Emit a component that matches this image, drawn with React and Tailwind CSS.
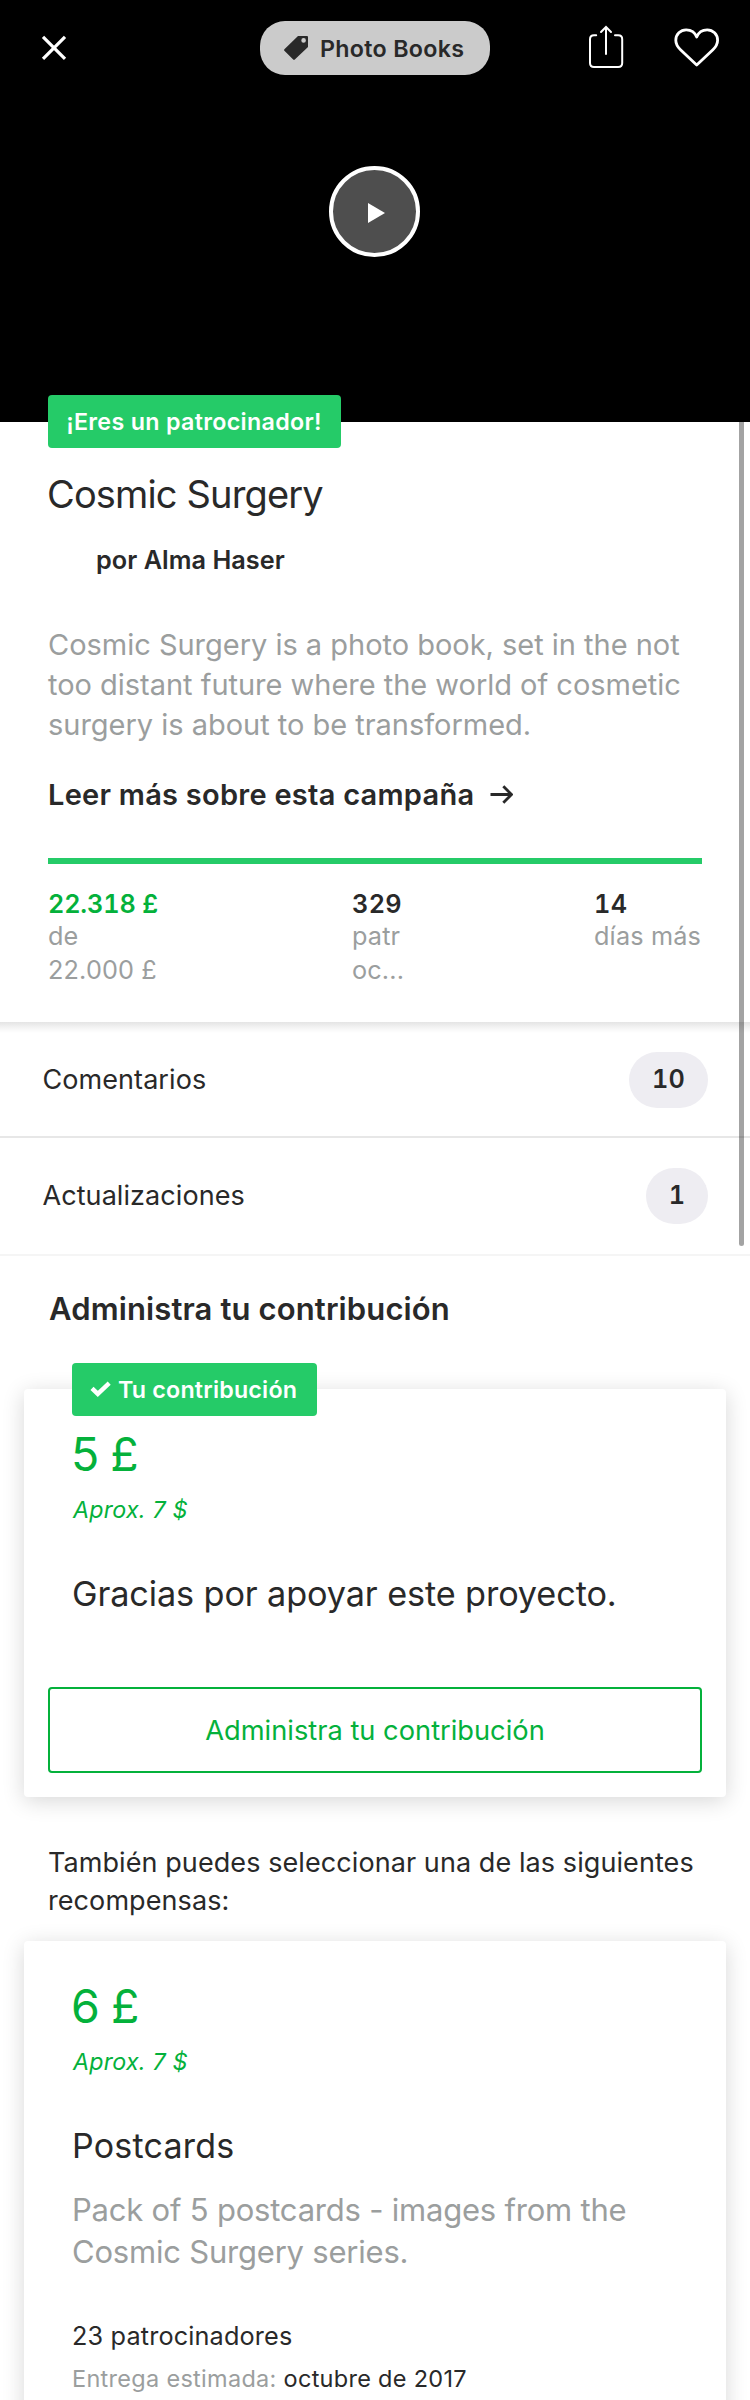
function CloseIcon() {
  return (
    <svg className="h-[54px] w-7" viewBox="40 21 28 54" fill="none" stroke="#fff" strokeWidth="3.2">
      <path d="M43 36.8 65 58.8M65 36.8 43 58.8" />
    </svg>
  )
}

function TagIcon() {
  return (
    <svg className="h-6 w-6" viewBox="284 36 24 24" fill="#292929">
      <path
        fillRule="evenodd"
        d="M298 36H307Q308 36 308 37V47L294.8 59.6Q294 60.3 293.2 59.6L284.4 50.8Q283.7 50 284.4 49.2ZM303.6 38.1a2.3 2.3 0 1 0 0 4.6 2.3 2.3 0 0 0 0-4.6Z"
      />
    </svg>
  )
}

function ShareIcon() {
  return (
    <svg className="h-[54px] w-10" viewBox="586 21 40 54" fill="none" stroke="#fff" strokeWidth="2" strokeLinecap="round">
      <path d="M596.2 35.2H594Q590 35.2 590 39.2V63Q590 67 594 67H618.2Q622.2 67 622.2 63V39.2Q622.2 35.2 618.2 35.2H615" />
      <path d="M606 54V27.6M601 32 606 27 611 32" />
    </svg>
  )
}

function HeartIcon() {
  return (
    <svg className="h-[54px] w-[50px]" viewBox="672 21 50 54" fill="none" stroke="#fff" strokeWidth="2.8" strokeLinejoin="round">
      <path d="M696.7 65 680.5 49.8C677.3 46.7 675.8 43.6 675.8 40.3 675.8 34.2 680.5 29.8 686.2 29.8 691 29.8 694.9 32.3 696.7 37 698.5 32.3 702.4 29.8 707.2 29.8 712.9 29.8 717.6 34.2 717.6 40.3 717.6 43.6 716.1 46.7 712.9 49.8Z" />
    </svg>
  )
}

function Hero() {
  return (
    <header className="h-[422px] bg-black pt-[21px]">
      <div className="flex h-[54px] items-center pl-10">
        <CloseIcon />
        <div className="ml-48 flex h-[54px] w-[230px] items-center rounded-[25px] bg-[#cbcbcb] pl-6">
          <TagIcon />
          <span className="ml-3 whitespace-nowrap pt-0.5 text-[23.25px] font-semibold tracking-[0.3px]">Photo Books</span>
        </div>
        <div className="ml-24">
          <ShareIcon />
        </div>
        <div className="ml-[46px]">
          <HeartIcon />
        </div>
      </div>
      <div className="ml-[329px] mt-[91px] flex h-[91px] w-[91px] items-center justify-center rounded-full border-4 border-white bg-[#4e4e4e]">
        <svg className="ml-[3px] mt-[3px] h-5 w-[17px]" viewBox="0 0 17 20" fill="#fff">
          <path d="M0 0 17 10 0 20Z" />
        </svg>
      </div>
    </header>
  )
}

function Stat({ value, lines, valueClass, className }) {
  return (
    <div className={className}>
      <div className={'-mb-px whitespace-nowrap font-semibold leading-[31px] tabular-nums ' + valueClass}>{value}</div>
      {lines.map((line) => (
        <div key={line} className="whitespace-nowrap leading-[34px] tracking-[0.15px] text-[#9b9e9e]">
          {line}
        </div>
      ))}
    </div>
  )
}

function Campaign() {
  return (
    <section className="relative -mt-[27px] h-[627px] px-12">
      <div className="flex h-[53px] w-[293px] items-center justify-center rounded bg-[#25cb68] pr-px pt-0.5 text-[23.25px] font-semibold tracking-[0.32px] text-white">
        ¡Eres un patrocinador!
      </div>
      <h1 className="-ml-px mt-[23px] text-[38px] leading-[46px] tracking-[-0.85px]">Cosmic Surgery</h1>
      <div className="mt-7 pl-12 text-[25.25px] font-semibold leading-[30px] tracking-[0.04px]">por Alma Haser</div>
      <p className="mt-[50px] whitespace-nowrap text-[29px] leading-10 tracking-[-0.02px] text-[#9b9e9e]">
        Cosmic Surgery is a photo book, set in the not
        <br />
        too distant future where the world of cosmetic
        <br />
        surgery is about to be transformed.
      </p>
      <div className="mt-8 flex h-9 items-center">
        <span className="whitespace-nowrap text-[29px] font-semibold leading-9 tracking-[0.26px]">
          Leer más sobre esta campaña
        </span>
        <svg className="ml-[15px] h-9 w-6" viewBox="489.5 777 24 36" fill="none" stroke="#292929" strokeWidth="2.8">
          <path d="M491 794.5H512M503.8 786.3 512 794.5 503.8 802.7" />
        </svg>
      </div>
      <div className="mt-[45px] h-1.5 bg-[#25cb68]" />
      <div className="mt-[25px] flex text-[25.25px]">
        <Stat className="w-[304px]" value="22.318 £" lines={['de', '22.000 £']} valueClass="text-[#04b13b] tracking-[-0.15px]" />
        <Stat className="w-[242px]" value="329" lines={['patr', 'oc...']} valueClass="tracking-[0.3px]" />
        <Stat value="14" lines={['días más']} valueClass="tracking-[0.4px]" />
      </div>
    </section>
  )
}

function CountRow({ label, count, className, badgeClass }) {
  return (
    <div className={'flex items-center justify-between pl-[42.5px] pr-[42px] ' + className}>
      <span className="pt-px text-[27px] tracking-[0.07px]">{label}</span>
      <span
        className={
          'flex h-14 items-center justify-center rounded-[28px] bg-[#eeedf2] text-[25.25px] font-semibold tabular-nums tracking-[0.2px] ' +
          badgeClass
        }
      >
        {count}
      </span>
    </div>
  )
}

function Price({ amount }) {
  return (
    <div className="pl-12 text-[#04b13b]">
      <div className="-ml-px text-[46.5px] leading-[56px] [word-spacing:-2px]">{amount}</div>
      <div className="ml-px mt-[14px] text-[23.25px] italic leading-7 tracking-[0.2px]">Aprox. 7 $</div>
    </div>
  )
}

function CurrentPledge() {
  return (
    <div className="mx-6 mt-[60px] h-[408px] rounded bg-white shadow-[0_4px_22px_rgba(0,0,0,0.16)]">
      <div className="relative -top-[26px] ml-12 flex h-[53px] w-[245px] items-center rounded bg-[#25cb68] pl-[18px] text-white">
        <svg className="h-[18px] w-[22px]" viewBox="90 1380 22 18" fill="none" stroke="#fff" strokeWidth="4.4">
          <path d="M92 1387.3 97.8 1392.9 109.2 1382.2" />
        </svg>
        <span className="ml-1.5 whitespace-nowrap pt-0.5 text-[23.25px] font-semibold tracking-[0.2px]">Tu contribución</span>
      </div>
      <div className="-mt-4">
        <Price amount="5 £" />
      </div>
      <h3 className="ml-12 mt-[49px] whitespace-nowrap text-[34.25px] leading-[42px] tracking-[-0.12px]">
        Gracias por apoyar este proyecto.
      </h3>
      <div className="mt-[72px] px-6">
        <button className="flex h-[86px] w-full items-center justify-center rounded border-2 border-[#04b13b] pt-0.5 text-[27.25px] text-[#04b13b]">
          Administra tu contribución
        </button>
      </div>
    </div>
  )
}

function Reward() {
  return (
    <div className="mx-6 mt-[21px] h-[640px] rounded bg-white pt-[37px] shadow-[0_4px_22px_rgba(0,0,0,0.16)]">
      <Price amount="6 £" />
      <div className="pl-12">
        <h3 className="mt-[49px] text-[34px] leading-[42px] tracking-[0.2px]">Postcards</h3>
        <p className="mt-[22px] whitespace-nowrap text-[31px] leading-[42px] tracking-[-0.21px] text-[#9b9e9e]">
          Pack of 5 postcards - images from the
          <br />
          Cosmic Surgery series.
        </p>
        <div className="mt-12 text-[25.25px] leading-[30px] tracking-[0.15px]">23 patrocinadores</div>
        <div className="mt-[14px] text-[23.5px] leading-7 tracking-[0.29px] text-[#9b9e9e]">
          Entrega estimada: <span className="text-[#292929]">octubre de 2017</span>
        </div>
      </div>
    </div>
  )
}

export default function App() {
  return (
    <div className="relative h-[2400px] w-[750px] overflow-hidden bg-white font-['Inter',sans-serif] text-[#292929]">
      <Hero />
      <Campaign />
      <CountRow
        label="Comentarios"
        count="10"
        className="h-[116px] border-b-2 border-[#e7e7e7] bg-[linear-gradient(#e4e4e4,#f7f7f7_7px,#fff_11px)] pb-px pt-[3px]"
        badgeClass="w-[79px]"
      />
      <CountRow label="Actualizaciones" count="1" className="h-[118px] border-b-2 border-[#f5f5f5]" badgeClass="w-[62px]" />
      <h2 className="pl-[49px] pt-[33px] text-[31px] font-semibold leading-10 tracking-[0.12px]">Administra tu contribución</h2>
      <CurrentPledge />
      <p className="mt-[47px] whitespace-nowrap pl-12 text-[27px] leading-[38px] tracking-[0.08px]">
        También puedes seleccionar una de las siguientes
        <br />
        recompensas:
      </p>
      <Reward />
      <div className="absolute left-[739px] top-[422px] h-[824px] w-[5px] rounded-b-full bg-black/36" />
    </div>
  )
}
